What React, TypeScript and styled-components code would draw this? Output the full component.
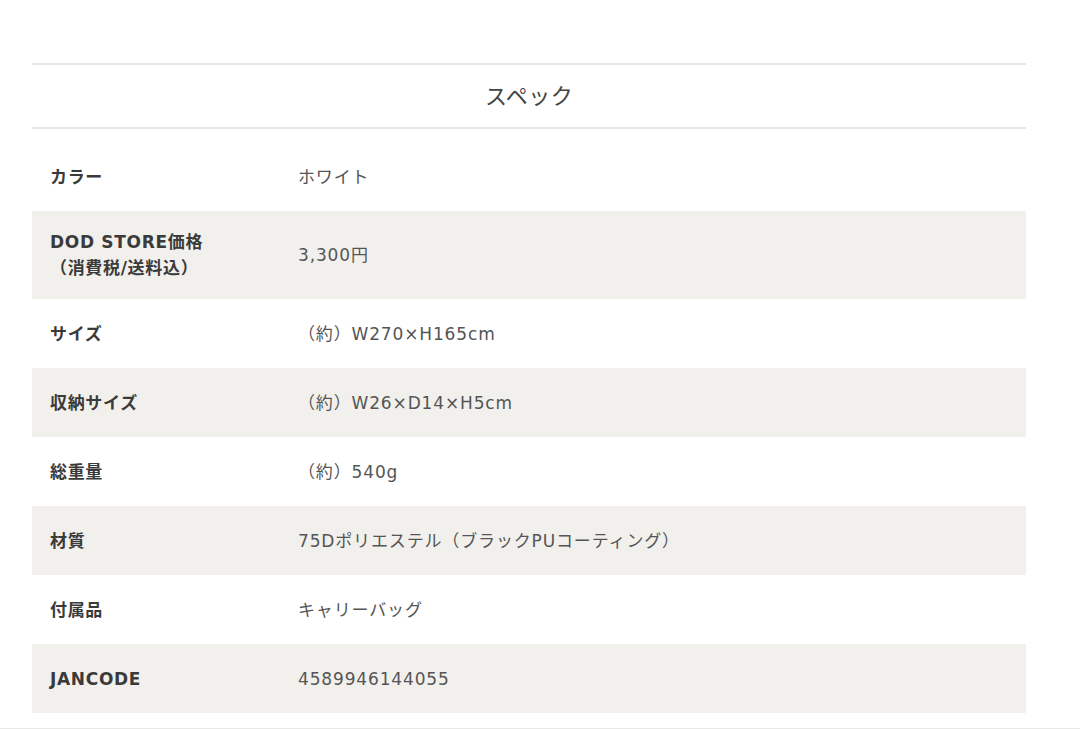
import styled, { createGlobalStyle } from 'styled-components';

const GlobalStyle = createGlobalStyle`
  html, body {
    margin: 0;
    padding: 0;
    background: #ffffff;
  }
  body {
    font-family: "DejaVu Sans", "Noto Sans CJK JP", sans-serif;
    color: #555555;
  }
`;

const specs = [
  { label: 'カラー', value: 'ホワイト' },
  { label: 'DOD STORE価格\n（消費税/送料込）', value: '3,300円' },
  { label: 'サイズ', value: '（約）W270×H165cm' },
  { label: '収納サイズ', value: '（約）W26×D14×H5cm' },
  { label: '総重量', value: '（約）540g' },
  { label: '材質', value: '75Dポリエステル（ブラックPUコーティング）' },
  { label: '付属品', value: 'キャリーバッグ' },
  { label: 'JANCODE', value: '4589946144055' }
];

const App = () => {
  return (
    <>
      <GlobalStyle />
      <Page>
        <SpecSection>
          <SectionHeader>
            <SectionTitle>スペック</SectionTitle>
          </SectionHeader>
          <SpecTable>
            {specs.map((spec, index) => (
              <SpecRow key={spec.label} striped={index % 2 === 1}>
                <SpecLabel>{spec.label}</SpecLabel>
                <SpecValue>{spec.value}</SpecValue>
              </SpecRow>
            ))}
          </SpecTable>
        </SpecSection>
        <BottomRule />
      </Page>
    </>
  );
};

const Page = styled.div`
  width: 1080px;
  padding-top: 63px;
`;

const SpecSection = styled.section`
  width: 994px;
  margin-left: 32px;
`;

const SectionHeader = styled.div`
  height: 62px;
  display: flex;
  align-items: center;
  justify-content: center;
  border-top: 2px solid #e6e6e4;
  border-bottom: 2px solid #e6e6e4;
`;

const SectionTitle = styled.h2`
  margin: 0 0 4px;
  font-family: "Noto Sans CJK JP", sans-serif;
  font-size: 22px;
  font-weight: 400;
  letter-spacing: 0.02em;
  color: #444444;
`;

const SpecTable = styled.div`
  margin-top: 13px;
  display: flex;
  flex-direction: column;
`;

const SpecRow = styled.div<{ striped: boolean }>`
  display: grid;
  grid-template-columns: 248px 1fr;
  align-items: center;
  min-height: 69px;
  padding: 18px;
  box-sizing: border-box;
  background: ${({ striped }) => (striped ? '#f2f0ec' : '#ffffff')};
`;

const SpecLabel = styled.div`
  white-space: pre-line;
  font-size: 17px;
  line-height: 26px;
  font-weight: 700;
  letter-spacing: 0.04em;
  color: #3a3a3a;
`;

const SpecValue = styled.div`
  font-size: 17px;
  line-height: 26px;
  font-weight: 400;
  color: #555555;
  letter-spacing: 0.05em;
`;

const BottomRule = styled.div`
  margin-top: 15px;
  height: 1px;
  background: #e8e8e6;
`;

export default App;
